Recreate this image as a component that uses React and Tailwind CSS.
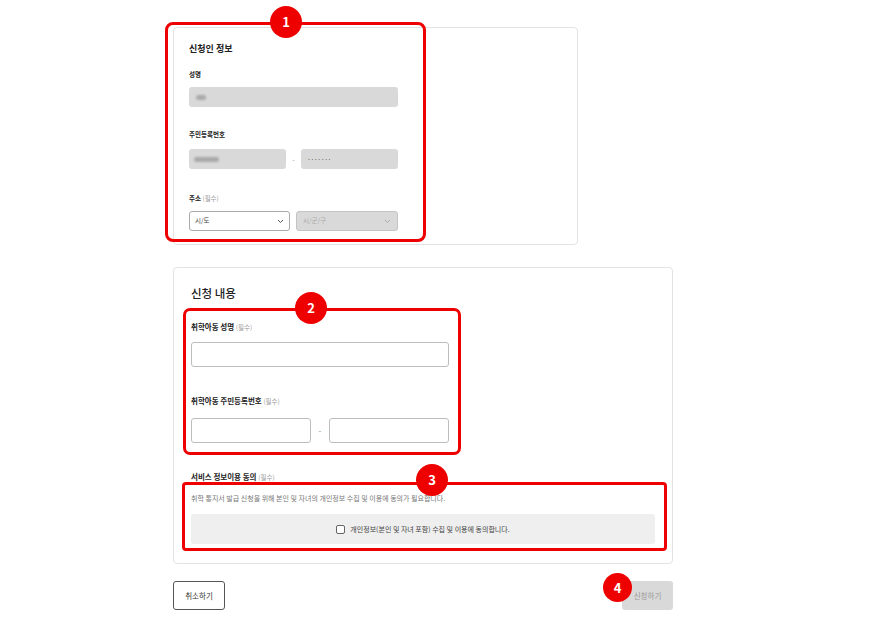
import React from "react";

const KR = { fontFamily: '"Noto Sans CJK KR", "Noto Sans", sans-serif' };

function Badge({ n, className }) {
  return (
    <div
      className={`absolute flex items-center justify-center rounded-full bg-[#ee0000] text-[13px] font-bold text-white ${className}`}
    >
      {n}
    </div>
  );
}

function Chevron({ color = "#555" }) {
  return (
    <svg width="7" height="5" viewBox="0 0 7 5" fill="none">
      <path d="M1 1l2.5 2.5L6 1" stroke={color} strokeWidth="1" />
    </svg>
  );
}

function Blur({ w }) {
  return <div className={`h-[5px] ${w} rounded-sm bg-[#a9a9a9] blur-[1.2px]`} />;
}

export default function App() {
  return (
    <div className="relative min-h-[633px] w-[889px] bg-white text-[#222]" style={KR}>
      <div className="flex flex-col pl-[173px] pt-[27px]">
        {/* 신청인 정보 */}
        <div className="flex h-[218px] w-[405px] flex-col rounded-[4px] border border-[#e3e3e3] px-[15px] pt-[14px]">
          <h2 className="text-[9px] font-bold leading-[14px]">신청인 정보</h2>
          <p className="mt-[13px] text-[6.5px] font-bold leading-[10px]">성명</p>
          <div className="mt-[8px] flex h-[20px] w-[209px] items-center rounded-[3px] bg-[#d9d9d9] px-[7px]">
            <Blur w="w-[10px]" />
          </div>
          <p className="mt-[22px] text-[6.5px] font-bold leading-[10px]">주민등록번호</p>
          <div className="mt-[10px] flex w-[209px] items-center">
            <div className="flex h-[20px] w-[97px] items-center rounded-[3px] bg-[#d9d9d9] px-[5px]">
              <Blur w="w-[25px]" />
            </div>
            <span className="flex-1 text-center text-[7px] text-[#999]">-</span>
            <div className="flex h-[20px] w-[97px] items-center rounded-[3px] bg-[#d9d9d9] px-[6px] text-[7px] tracking-[-0.5px] text-[#555]">
              ·······
            </div>
          </div>
          <p className="mt-[24px] text-[6.5px] font-bold leading-[10px]">
            주소 <span className="font-normal text-[#999]">(필수)</span>
          </p>
          <div className="mt-[8px] flex w-[209px] items-center justify-between">
            <div className="flex h-[20px] w-[101px] items-center justify-between rounded-[3px] border border-[#aaa] bg-white px-[5px] text-[6.5px] text-[#444]">
              <span>시/도</span>
              <Chevron />
            </div>
            <div className="flex h-[20px] w-[102px] items-center justify-between rounded-[3px] border border-[#c4c4c4] bg-[#d9d9d9] px-[6px] text-[6.5px] text-[#aaa]">
              <span>시/군/구</span>
              <Chevron color="#aaa" />
            </div>
          </div>
        </div>

        {/* 신청 내용 */}
        <div className="mt-[22px] flex h-[297px] w-[500px] flex-col rounded-[4px] border border-[#e3e3e3] px-[17px] pt-[17px]">
          <h2 className="text-[11.5px] font-medium leading-[16px]">신청 내용</h2>
          <p className="mt-[21px] text-[7.5px] font-bold leading-[10px]">
            취학아동 성명 <span className="text-[6.5px] font-normal text-[#999]">(필수)</span>
          </p>
          <div className="mt-[10px] h-[25px] w-[258px] rounded-[3px] border border-[#bdbdbd]" />
          <p className="mt-[29px] text-[7.5px] font-bold leading-[10px]">
            취학아동 주민등록번호 <span className="text-[6.5px] font-normal text-[#999]">(필수)</span>
          </p>
          <div className="mt-[12px] flex w-[258px] items-center">
            <div className="h-[25px] w-[120px] rounded-[3px] border border-[#bdbdbd]" />
            <span className="flex-1 text-center text-[8px] text-[#888]">-</span>
            <div className="h-[25px] w-[120px] rounded-[3px] border border-[#bdbdbd]" />
          </div>
          <p className="mt-[29px] text-[7.5px] font-bold leading-[10px]">
            서비스 정보이용 동의 <span className="text-[6.5px] font-normal text-[#999]">(필수)</span>
          </p>
          <p className="mt-[11px] text-[7px] leading-[10px] text-[#777]">
            취학 통지서 발급 신청을 위해 본인 및 자녀의 개인정보 수집 및 이용에 동의가 필요합니다.
          </p>
          <div className="mt-[11px] flex h-[30px] w-[464px] items-center justify-center gap-[5px] rounded-[3px] bg-[#efefef]">
            <div className="h-[9px] w-[9px] rounded-[2px] border border-[#666] bg-white" />
            <span className="text-[7px] text-[#444]">
              개인정보(본인 및 자녀 포함) 수집 및 이용에 동의합니다.
            </span>
          </div>
        </div>

        {/* 버튼 */}
        <div className="mt-[17px] flex w-[500px] items-center justify-between">
          <button className="h-[29px] w-[52px] rounded-[3px] border border-[#555] bg-white text-[7.5px] text-[#333]">
            취소하기
          </button>
          <button className="h-[29px] w-[51px] rounded-[3px] bg-[#d9d9d9] text-[7.5px] text-[#999]">
            신청하기
          </button>
        </div>
      </div>

      {/* annotations */}
      <div className="absolute left-[165px] top-[22px] h-[220px] w-[261px] rounded-[8px] border-[3px] border-[#ee0000]" />
      <Badge n="1" className="left-[270px] top-[6px] h-[32px] w-[32px]" />
      <div className="absolute left-[183px] top-[308px] h-[147px] w-[278px] rounded-[7px] border-[3px] border-[#ee0000]" />
      <Badge n="2" className="left-[295px] top-[292px] h-[32px] w-[32px]" />
      <div className="absolute left-[182px] top-[482px] h-[69px] w-[485px] rounded-[4px] border-[3px] border-[#ee0000]" />
      <Badge n="3" className="left-[416px] top-[464px] h-[32px] w-[32px]" />
      <Badge n="4" className="left-[603px] top-[573px] h-[29px] w-[29px]" />
    </div>
  );
}
